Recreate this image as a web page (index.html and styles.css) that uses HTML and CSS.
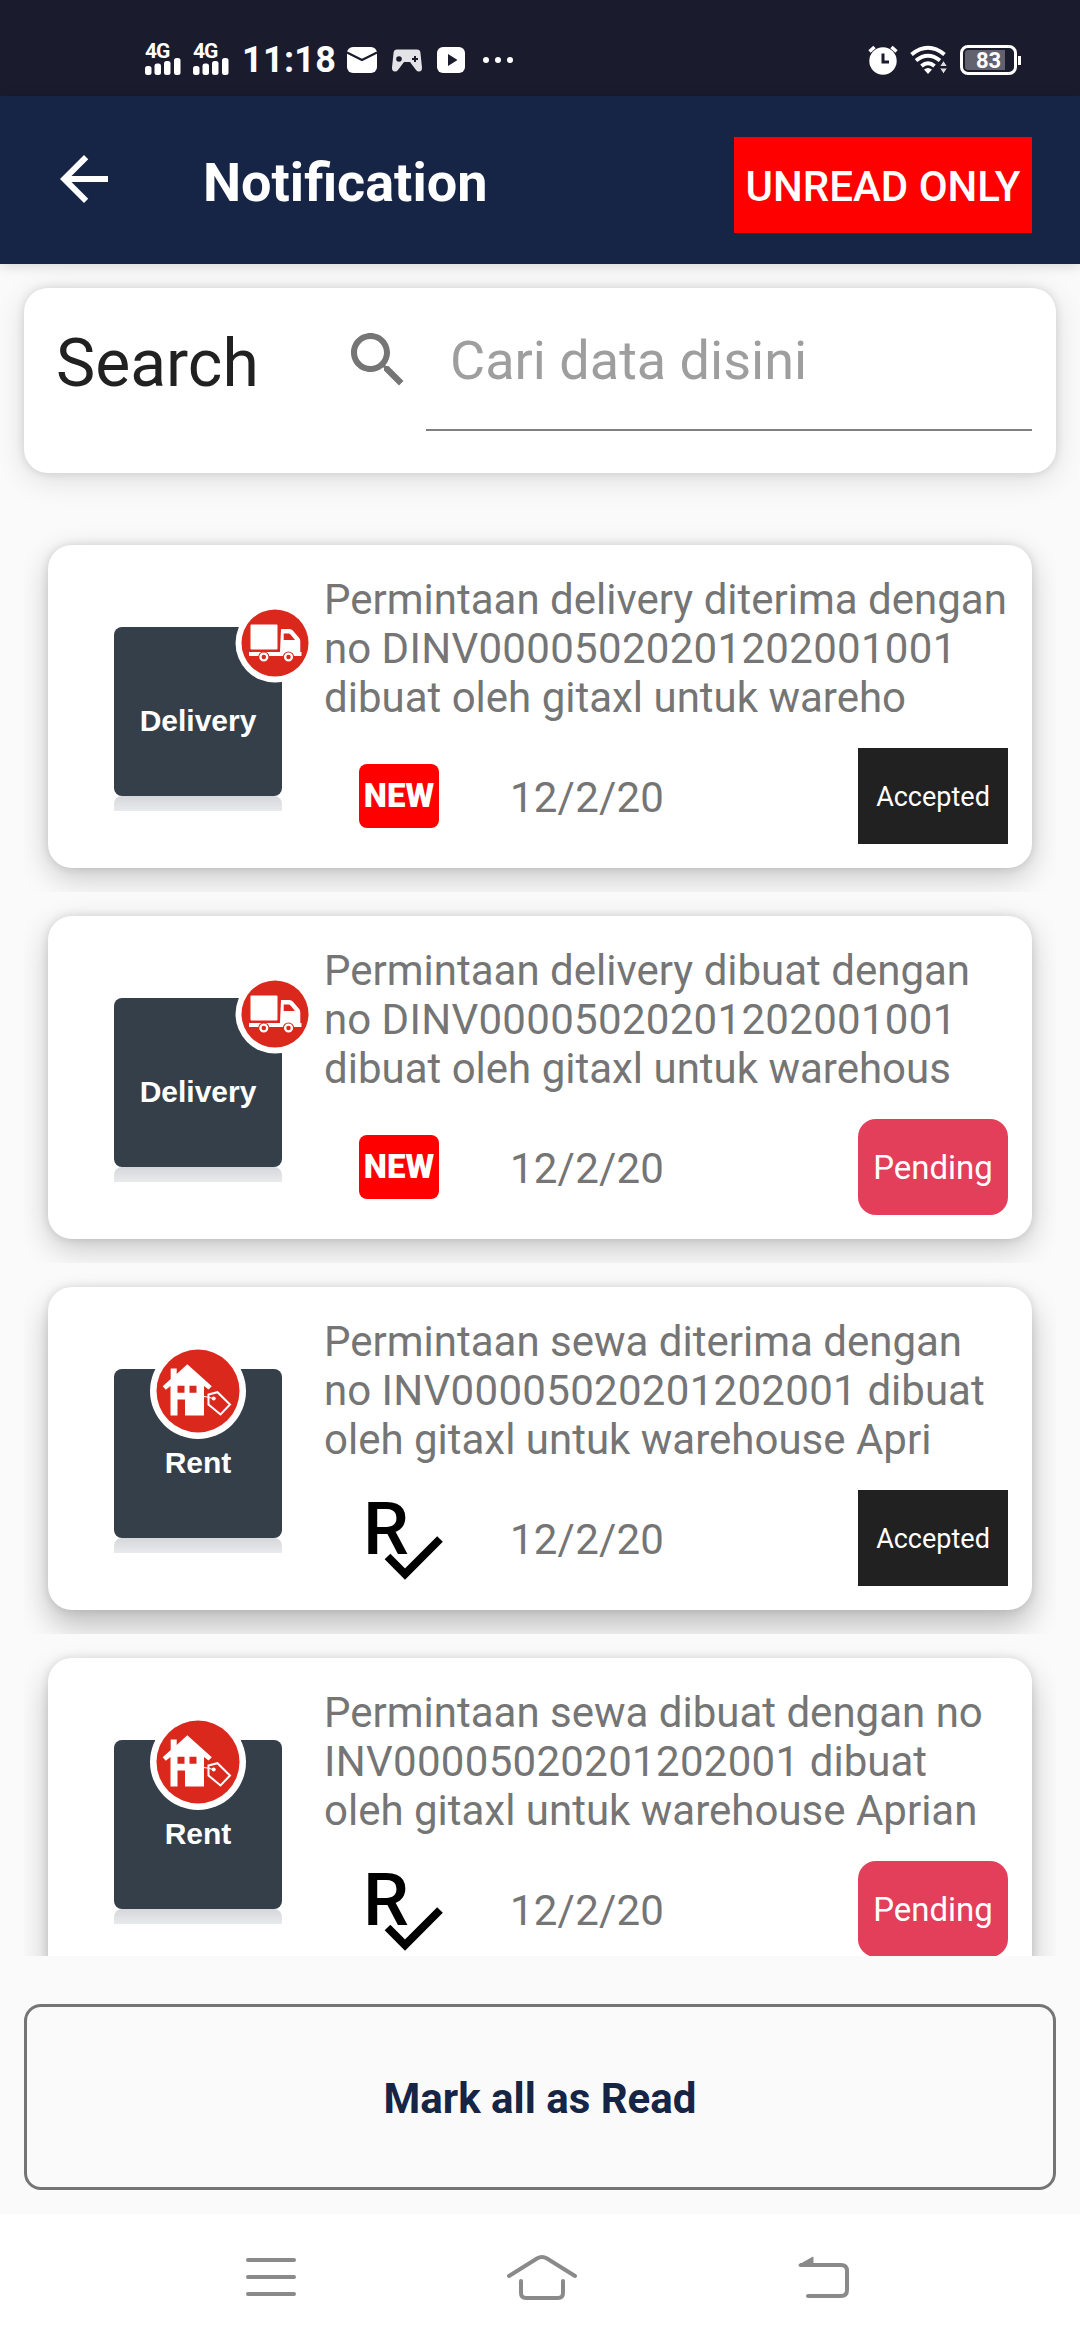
FILE: index.html
```html
<!DOCTYPE html>
<html lang="id">
<head>
  <meta charset="UTF-8" />
  <meta name="viewport" content="width=device-width, initial-scale=1" />
  <title>Notification</title>
  <link rel="stylesheet" href="styles.css">
</head>
<body>
  <!-- shared icons -->
  <svg class="defs" width="0" height="0">
    <symbol id="signal" viewBox="0 0 36 18">
      <rect x="0" y="9" width="6.5" height="9" rx="2.5" />
      <rect x="9.5" y="6.5" width="6.5" height="11.5" rx="2.5" />
      <rect x="19" y="4" width="6.5" height="14" rx="2.5" />
      <rect x="29" y="1" width="6.5" height="17" rx="2.5" />
    </symbol>
    <symbol id="truck" viewBox="0 0 80 80">
      <circle cx="40" cy="40" r="39.5" fill="#fff" />
      <circle cx="40" cy="40" r="33.5" fill="#db281d" />
      <rect x="15.5" y="21.5" width="27" height="25" rx="1" fill="#fff" />
      <path d="M46 26h8.5q2 0 3.300 1.500l6 7q1.500 1.700 1.500 4v10.500H66.500v4H14v-4h31z" fill="#fff" />
      <path d="M48.700 30.500h5q1 0 1.800 1l4.500 5.500h-11.300z" fill="#db281d" />
      <path d="M16 48.200h28" stroke="#db281d" stroke-width="1" />
      <circle cx="28.8" cy="54" r="5.6" fill="#db281d" />
      <circle cx="53.5" cy="54" r="5.6" fill="#db281d" />
      <circle cx="28.8" cy="54" r="3.4" fill="none" stroke="#fff" stroke-width="2.3" />
      <circle cx="53.5" cy="54" r="3.4" fill="none" stroke="#fff" stroke-width="2.3" />
    </symbol>
    <symbol id="house" viewBox="0 0 96 96">
      <circle cx="48" cy="48" r="48" fill="#fff" />
      <circle cx="48" cy="48" r="41.5" fill="#db281d" />
      <path d="M12.700 43.200l8-7.200V25.500h6v5.500L37.300 21.300l24.500 22-3.300 3.300-4.500-3.500v29.500H35V56.500h-7.500v16H20.500V43l-4.700 3.800z" fill="#fff" />
      <path d="M27.500 42.700h7v7h-7zM39.500 42.700h7v7h-7z" fill="#db281d" />
      <path d="M58.500 51.500l9-2.300 12.500 12.300-9.500 10-12-10z" fill="none" stroke="#fff" stroke-width="2" />
      <path d="M54 53.500q5 .5 9 2" fill="none" stroke="#fff" stroke-width="1.2" />
      <circle cx="63.7" cy="55.5" r="2" fill="#fff" />
    </symbol>
  </svg>

  <div class="status-bar">
    <div class="status-left">
      <div class="network"><span>4G</span><svg width="36" height="18"><use href="#signal" /></svg></div>
      <div class="network"><span>4G</span><svg width="36" height="18"><use href="#signal" /></svg></div>
      <span class="clock">11:18</span>
      <svg class="mail" width="30" height="26" viewBox="0 0 30 26">
        <rect width="30" height="26" rx="6" />
        <path d="M0 5.500L15 13 30 5.500" fill="none" stroke="#1a1b2d" stroke-width="2.2" />
      </svg>
      <svg class="gamepad" width="30" height="23" viewBox="0 0 30 23">
        <path d="M5 .5h20q3 0 3.400 3L30 18.500q.2 4-3 4-1.800 0-3-1.500l-6-8h-6l-6 8q-1.200 1.500-3 1.500-3.200 0-3-4L1.600 3.500Q2 .5 5 .5z" fill="#e4e4e8" />
        <circle cx="7" cy="10" r="2.8" fill="#1a1b2d" />
        <path d="M23 7v6M20 10h6" stroke="#1a1b2d" stroke-width="2" />
      </svg>
      <svg class="play" width="28" height="26" viewBox="0 0 28 26">
        <rect width="28" height="26" rx="6" />
        <path d="M11 7l9.500 6-9.500 6z" fill="#1a1b2d" />
      </svg>
      <svg width="30" height="6" viewBox="0 0 30 6">
        <circle cx="3" cy="3" r="3" /><circle cx="15" cy="3" r="3" /><circle cx="27" cy="3" r="3" />
      </svg>
    </div>
    <div class="status-right">
      <svg width="30" height="30" viewBox="0 0 30 30">
        <circle cx="15" cy="16" r="13.7" />
        <path d="M1.500 6.500l5-4.500M28.500 6.500l-5-4.500" stroke="#fff" stroke-width="3.5" />
        <path d="M15 8.500v8.500h6" fill="none" stroke="#1a1b2d" stroke-width="3" />
      </svg>
      <svg width="38" height="30" viewBox="0 0 38 30">
        <path d="M1.500 9.500Q18 -4 34.500 9.500M6 15.500Q18 6 30 15.500M11.500 21Q18 15.500 24.500 21" fill="none" stroke="#fff" stroke-width="4" />
        <path d="M18 29l-4-4.500q4-3 8 0z" />
        <path d="M33.500 15.500l4 6h-8zM33.500 29l4-6h-8z" fill="#ddd" stroke="#1a1b2d" stroke-width="1" />
      </svg>
      <div class="battery"><span>83</span></div>
    </div>
  </div>

  <header>
    <svg class="back" width="72" height="72" viewBox="0 0 24 24"><path d="M20 11H7.830l5.590-5.590L12 4l-8 8 8 8 1.410-1.410L7.830 13H20v-2z" /></svg>
    <h1>Notification</h1>
    <button class="unread">UNREAD ONLY</button>
  </header>

  <div class="search-card">
    <span class="search-label">Search</span>
    <svg width="72" height="72" viewBox="0 0 24 24"><path fill="#757575" d="M15.500 14h-.79l-.28-.27C15.410 12.590 16 11.110 16 9.500 16 5.910 13.090 3 9.500 3S3 5.910 3 9.500 5.910 16 9.500 16c1.610 0 3.090-.59 4.230-1.570l.27.28v.79l5 4.990L20.490 19l-4.990-5zm-6 0C7.010 14 5 11.990 5 9.500S7.010 5 9.500 5 14 7.010 14 9.500 11.990 14 9.500 14z" /></svg>
    <div class="search-field">Cari data disini</div>
  </div>

  <div class="list">
    <div class="item">
      <div class="card">
        <div class="thumb">
          <div class="tile">Delivery</div>
          <svg class="truck" width="80" height="80"><use href="#truck" /></svg>
        </div>
        <div class="info">
          <p>Permintaan delivery diterima dengan<br>no <span class="code">DINV00005020201202001001</span><br>dibuat oleh gitaxl untuk wareho</p>
          <div class="meta">
            <span class="new">NEW</span>
            <span class="date">12/2/20</span>
            <span class="state accepted">Accepted</span>
          </div>
        </div>
      </div>
    </div>

    <div class="item">
      <div class="card">
        <div class="thumb">
          <div class="tile">Delivery</div>
          <svg class="truck" width="80" height="80"><use href="#truck" /></svg>
        </div>
        <div class="info">
          <p>Permintaan delivery dibuat dengan<br>no <span class="code">DINV00005020201202001001</span><br>dibuat oleh gitaxl untuk warehous</p>
          <div class="meta">
            <span class="new">NEW</span>
            <span class="date">12/2/20</span>
            <span class="state pending">Pending</span>
          </div>
        </div>
      </div>
    </div>

    <div class="item">
      <div class="card">
        <div class="thumb">
          <div class="tile">Rent</div>
          <svg class="house" width="96" height="96"><use href="#house" /></svg>
        </div>
        <div class="info">
          <p>Permintaan sewa diterima dengan<br>no <span class="code">INV00005020201202001</span> dibuat<br>oleh gitaxl untuk warehouse Apri</p>
          <div class="meta">
            <svg class="read" width="80" height="96" viewBox="8 0 80 96">
              <text x="12" y="64">R</text>
              <path d="M36.500 66.500L54 84l35-35" />
            </svg>
            <span class="date">12/2/20</span>
            <span class="state accepted">Accepted</span>
          </div>
        </div>
      </div>
    </div>

    <div class="item">
      <div class="card">
        <div class="thumb">
          <div class="tile">Rent</div>
          <svg class="house" width="96" height="96"><use href="#house" /></svg>
        </div>
        <div class="info">
          <p>Permintaan sewa dibuat dengan no<br><span class="code">INV00005020201202001</span> dibuat<br>oleh gitaxl untuk warehouse Aprian</p>
          <div class="meta">
            <svg class="read" width="80" height="96" viewBox="8 0 80 96">
              <text x="12" y="64">R</text>
              <path d="M36.500 66.500L54 84l35-35" />
            </svg>
            <span class="date">12/2/20</span>
            <span class="state pending">Pending</span>
          </div>
        </div>
      </div>
    </div>
  </div>

  <button class="mark-all">Mark all as Read</button>

  <nav>
    <svg width="50" height="40" viewBox="0 0 50 40"><path d="M2 3h46M2 20h46M2 37h46" /></svg>
    <svg class="home" width="72" height="46" viewBox="0 0 72 46"><path d="M3 22L31 4.500q5-3 10 0L69 22M15 27v12q0 5 5 5h32q5 0 5-5V27" /></svg>
    <svg width="52" height="44" viewBox="0 0 52 44"><path d="M3 10h40q6 0 6 6v19q0 6-6 6H10" /><path class="tip" d="M1 10L15 2v9H2z" /></svg>
  </nav>
</body>
</html>
```
FILE: styles.css
```css
* {
  box-sizing: border-box;
}

body {
  margin: 0;
  width: 1080px;
  height: 2340px;
  overflow: hidden;
  display: flex;
  flex-direction: column;
  background-color: #fafafa;
  font-family: Roboto, sans-serif;
  color: #757575;
}

svg {
  flex: none;
  overflow: visible;
}

button {
  font-family: inherit;
  padding: 0;
  border: none;
}

.defs {
  position: absolute;
}

/* status bar */
.status-bar {
  flex: none;
  height: 96px;
  padding: 24px 63px 0 145px;
  display: flex;
  justify-content: space-between;
  align-items: center;
  background-color: #1a1b2d;
  color: white;
  fill: white;
}

.status-left, .status-right {
  display: flex;
  align-items: center;
}

.network {
  width: 36px;
  height: 30px;
  margin-right: 12px;
  display: flex;
  flex-direction: column;
}

.network span {
  height: 12px;
  font-size: 21px;
  line-height: 12px;
  font-weight: bold;
  letter-spacing: -1px;
}

.clock {
  margin-left: 1px;
  width: 105px;
  font-size: 36px;
  line-height: 38px;
  font-weight: bold;
  letter-spacing: 0.3px;
}

.gamepad {
  margin: 0 15px;
}

.play {
  margin-right: 18px;
}

.status-right {
  gap: 12px;
}

.battery {
  position: relative;
  width: 57px;
  height: 30px;
  border: 3px solid white;
  border-radius: 8px;
  background: linear-gradient(to right, #62626f 40px, transparent 40px) content-box;
  padding: 2px;
  text-align: center;
  font-size: 22px;
  line-height: 21px;
  font-weight: bold;
}

.battery::after {
  content: "";
  position: absolute;
  right: -7px;
  top: 8px;
  width: 3px;
  height: 9px;
  background-color: white;
}

/* app bar */
header {
  flex: none;
  position: relative;
  height: 168px;
  padding: 0 48px;
  display: flex;
  align-items: center;
  background-color: #162446;
  box-shadow: 0 2px 12px rgba(0, 0, 0, 0.15);
}

.back {
  margin-bottom: 2px;
  fill: white;
}

h1 {
  margin: 4px auto 0 83px;
  font-size: 54px;
  color: white;
}

.unread {
  width: 298px;
  height: 96px;
  margin-top: 10px;
  padding-top: 2px;
  background-color: #f00;
  color: white;
  font-size: 42px;
  font-weight: 500;
}

/* search */
.search-card {
  flex: none;
  height: 185px;
  margin: 24px 24px 48px;
  padding: 0 24px 0 32px;
  display: flex;
  align-items: flex-start;
  background-color: white;
  border-radius: 24px;
  box-shadow: 0 0 10px rgba(0, 0, 0, 0.12), 0 6px 30px rgba(0, 0, 0, 0.12);
}

.search-card svg {
  margin-top: 36px;
}

.search-label {
  width: 286px;
  padding-top: 37px;
  font-size: 66px;
  line-height: 77px;
  color: #212121;
}

.search-field {
  width: 606px;
  height: 143px;
  margin-left: 12px;
  padding: 41px 24px 0;
  border-bottom: 2px solid #808080;
  font-size: 54px;
  line-height: 63px;
  color: #9e9e9e;
}

/* notifications */
.list {
  flex: none;
  height: 1435px;
  overflow: hidden;
}

.item {
  height: 371px;
  margin: 0 24px;
  padding: 24px;
  overflow: hidden;
}

.card {
  height: 323px;
  padding: 24px;
  display: flex;
  background-color: white;
  border-radius: 24px;
  box-shadow: 0 0 10px rgba(0, 0, 0, 0.12), 0 10px 30px rgba(0, 0, 0, 0.2);
}

.item:nth-child(n+3) .card {
  box-shadow: 0 0 10px rgba(0, 0, 0, 0.12), 0 16px 30px rgba(0, 0, 0, 0.24);
}

.thumb {
  position: relative;
  flex: none;
  width: 252px;
  padding: 58px 42px 0;
}

.tile {
  height: 169px;
  padding-top: 76px;
  border-radius: 8px;
  background-color: #343f49;
  color: white;
  font: bold 30px/35px "Liberation Sans", sans-serif;
  text-align: center;
}

/* reflection under the tile */
.thumb::after {
  content: "";
  display: block;
  height: 15px;
  border-radius: 8px 8px 0 0;
  background: linear-gradient(#d5d7da, #e9eaec);
}

.truck {
  position: absolute;
  left: 163px;
  top: 34px;
}

.house {
  position: absolute;
  left: 78px;
  top: 32px;
}

.info {
  flex: 1;
  display: flex;
  flex-direction: column;
  justify-content: space-between;
}

.info p {
  margin: 6px 0 0;
  font-size: 42px;
  line-height: 49px;
  white-space: nowrap;
}

.code {
  letter-spacing: 0.3px;
}

.meta {
  height: 96px;
  padding-left: 35px;
  display: flex;
  align-items: center;
}

.new {
  width: 80px;
  height: 64px;
  border-radius: 8px;
  background-color: #f00;
  color: white;
  text-align: center;
  font-size: 33px;
  line-height: 64px;
  font-weight: 900;
}

.read text {
  font-size: 73px;
  font-weight: 500;
}

.read path {
  fill: none;
  stroke: black;
  stroke-width: 8;
}

.date {
  margin-left: 71px;
  padding-top: 2px;
  font-size: 42px;
  letter-spacing: 0.2px;
}

.state {
  width: 150px;
  height: 96px;
  margin-left: auto;
  padding-top: 1px;
  color: white;
  text-align: center;
  line-height: 96px;
}

.accepted {
  background-color: #212121;
  font-size: 27px;
}

.pending {
  background-color: #e33e5a;
  border-radius: 18px;
  font-size: 33px;
}

/* bottom */
.mark-all {
  flex: none;
  height: 186px;
  margin: 48px 24px 24px;
  padding-top: 2px;
  border: 3px solid #757575;
  border-radius: 17px;
  background-color: transparent;
  color: #162446;
  font-size: 42px;
  font-weight: bold;
}

nav {
  flex: 1;
  padding: 0 230px 0 246px;
  display: flex;
  justify-content: space-between;
  align-items: center;
  background-color: white;
}

nav path {
  fill: none;
  stroke: #8a8a8a;
  stroke-width: 4;
  stroke-linecap: round;
}

.home {
  margin-right: 11px;
}

nav .tip {
  fill: #8a8a8a;
  stroke-width: 1;
}
```
